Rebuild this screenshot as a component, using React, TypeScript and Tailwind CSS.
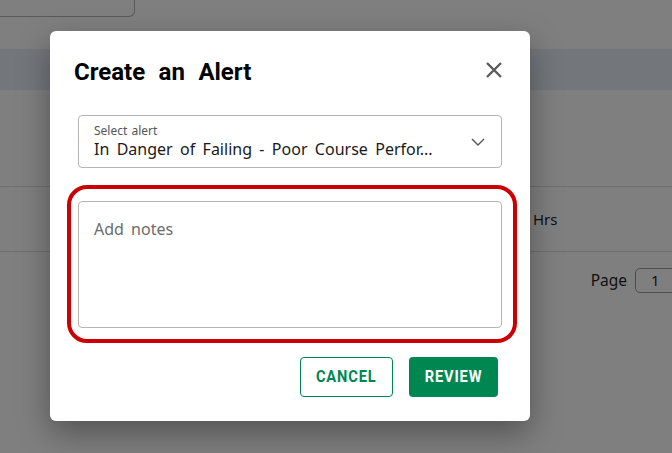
import React from "react";

export default function App() {
  return (
    <div className="relative h-[453px] w-[672px] overflow-hidden bg-white font-['Noto_Sans',sans-serif] text-[#1f1f1f]">
      {/* background page */}
      <div className="h-[17px] w-[135px] rounded-br-[6px] border-r border-b border-[#b4b4b4]" />
      <div className="mt-[32px] h-[41px] bg-[#e6eef6]" />
      <div className="mt-[96px] flex h-[66px] items-center border-y border-[#dcdcdc] pl-[533px] text-[15px]">
        Hrs
      </div>
      <div className="mt-[16px] flex items-center justify-end gap-[8px]">
        <span className="text-[15.5px]">Page</span>
        <div className="-mr-[14px] flex h-[25px] w-[51px] items-center rounded-[5px] border border-[#9a9a9a] pl-[15px] text-[15px]">
          1
        </div>
      </div>

      {/* overlay */}
      <div className="absolute inset-0 bg-black/50" />

      {/* modal */}
      <div className="absolute left-[50px] top-[31px] flex h-[390px] w-[480px] flex-col rounded-[6px] bg-white shadow-[0_12px_32px_rgba(0,0,0,0.35)]">
        <div className="mt-[27px] flex h-[28px] items-center justify-between pl-6 pr-[28px]">
          <h2 className="font-['Roboto',sans-serif] text-[24px] font-bold text-black [word-spacing:7.5px]">
            Create an Alert
          </h2>
          <button className="mb-[4px] text-[#5a5a5a]" aria-label="Close">
            <svg width="16" height="16" viewBox="0 0 16 16" fill="none">
              <path d="M1 1L15 15M15 1L1 15" stroke="currentColor" strokeWidth="2.4" strokeLinecap="butt" />
            </svg>
          </button>
        </div>

        <div className="mt-[29px] px-7">
          <div className="flex h-[53px] items-center justify-between rounded-[4px] border border-[#b5b5b5] pl-[15px] pr-[16px]">
            <div className="flex flex-col">
              <span className="text-[12px] leading-[14px] text-[#555] [word-spacing:1px]">Select alert</span>
              <span className="text-[16px] leading-[22px] text-[#1a1a1a] [word-spacing:3.2px]">
                In Danger of Failing - Poor Course Perfor...
              </span>
            </div>
            <svg width="14" height="8" viewBox="0 0 14 8" fill="none" className="text-[#555]">
              <path d="M1 1L7 7L13 1" stroke="currentColor" strokeWidth="1.4" />
            </svg>
          </div>
        </div>

        <div className="relative mt-[33px] px-7">
          <div className="h-[127px] rounded-[4px] border border-[#b5b5b5] pl-[15px] pt-[16px] text-[16px] leading-[22px] text-[#6b6b6b] [word-spacing:3px]">
            Add notes
          </div>
          <div className="pointer-events-none absolute left-[17px] right-[13px] -top-[16px] -bottom-[15px] rounded-[20px] border-[4px] border-[#cc0000]" />
        </div>

        <div className="mt-[29px] flex justify-end gap-4 pr-8">
          <button className="flex h-[40px] w-[93px] items-center justify-center rounded-[4px] border border-[#008751] text-[#008751]">
            <span className="inline-block scale-x-[0.86] font-['Roboto',sans-serif] text-[17px] font-bold tracking-[1px]">
              CANCEL
            </span>
          </button>
          <button className="flex h-[40px] w-[89px] items-center justify-center rounded-[4px] bg-[#008751] text-white">
            <span className="inline-block scale-x-[0.86] font-['Roboto',sans-serif] text-[17px] font-bold tracking-[1px]">
              REVIEW
            </span>
          </button>
        </div>
      </div>
    </div>
  );
}
